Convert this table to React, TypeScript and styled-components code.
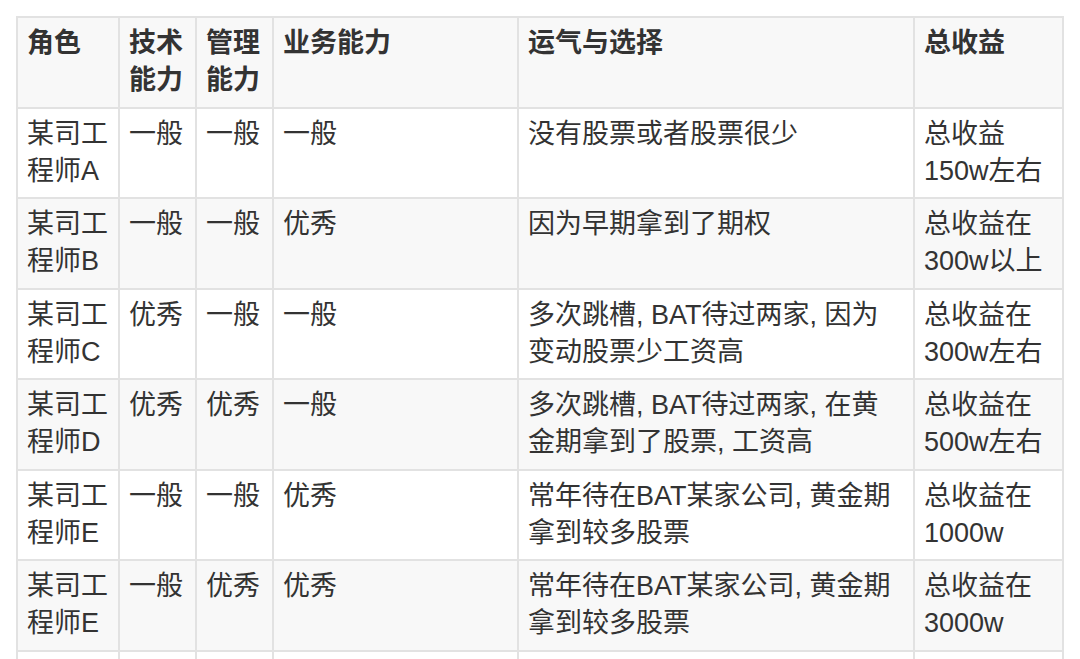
import React from "react";
import styled, { createGlobalStyle } from "styled-components";

const Global = createGlobalStyle`
  html, body { margin: 0; padding: 0; background: #ffffff; }
  body { font-family: "Liberation Sans", "Noto Sans CJK SC", sans-serif; color: #333333; }
`;

const Page = styled.div`
  padding: 16px 0 0 16px;
  height: 659px;
  overflow: hidden;
  box-sizing: border-box;
`;

const Table = styled.table`
  border-collapse: collapse;
  table-layout: fixed;
  width: 1048px;
  font-size: 27px;
  line-height: 37px;
`;

const Cell = styled.td`
  border: 2px solid #e2e2e2;
  padding: 7px 9px;
  vertical-align: top;
  text-align: left;
`;

const HeadCell = styled.th`
  border: 2px solid #e2e2e2;
  padding: 7px 9px;
  vertical-align: top;
  text-align: left;
  font-weight: 600;
`;

const Row = styled.tr<{ $shade: boolean }>`
  background: ${(p) => (p.$shade ? "#f8f8f8" : "#ffffff")};
  height: 90.5px;
`;

const widths = [102, 77, 77, 245, 396, 149];
const headers = ["角色", "技术能力", "管理能力", "业务能力", "运气与选择", "总收益"];

const rows: string[][] = [
  ["某司工程师A", "一般", "一般", "一般", "没有股票或者股票很少", "总收益 150w左右"],
  ["某司工程师B", "一般", "一般", "优秀", "因为早期拿到了期权", "总收益在300w以上"],
  ["某司工程师C", "优秀", "一般", "一般", "多次跳槽, BAT待过两家, 因为变动股票少工资高", "总收益在300w左右"],
  ["某司工程师D", "优秀", "优秀", "一般", "多次跳槽, BAT待过两家, 在黄金期拿到了股票, 工资高", "总收益在500w左右"],
  ["某司工程师E", "一般", "一般", "优秀", "常年待在BAT某家公司, 黄金期拿到较多股票", "总收益在1000w"],
  ["某司工程师E", "一般", "优秀", "优秀", "常年待在BAT某家公司, 黄金期拿到较多股票", "总收益在3000w"],
];

export default function App() {
  return (
    <Page>
      <Global />
      <Table>
        <colgroup>
          {widths.map((w, i) => (
            <col key={i} style={{ width: w }} />
          ))}
        </colgroup>
        <thead>
          <Row $shade={true}>
            {headers.map((h) => (
              <HeadCell key={h}>{h}</HeadCell>
            ))}
          </Row>
        </thead>
        <tbody>
          {rows.map((r, i) => (
            <Row key={i} $shade={i % 2 === 1}>
              {r.map((c, j) => (
                <Cell key={j}>{c}</Cell>
              ))}
            </Row>
          ))}
          <Row $shade={false}>
            {widths.map((_, j) => (
              <Cell key={j}>&nbsp;</Cell>
            ))}
          </Row>
        </tbody>
      </Table>
    </Page>
  );
}
